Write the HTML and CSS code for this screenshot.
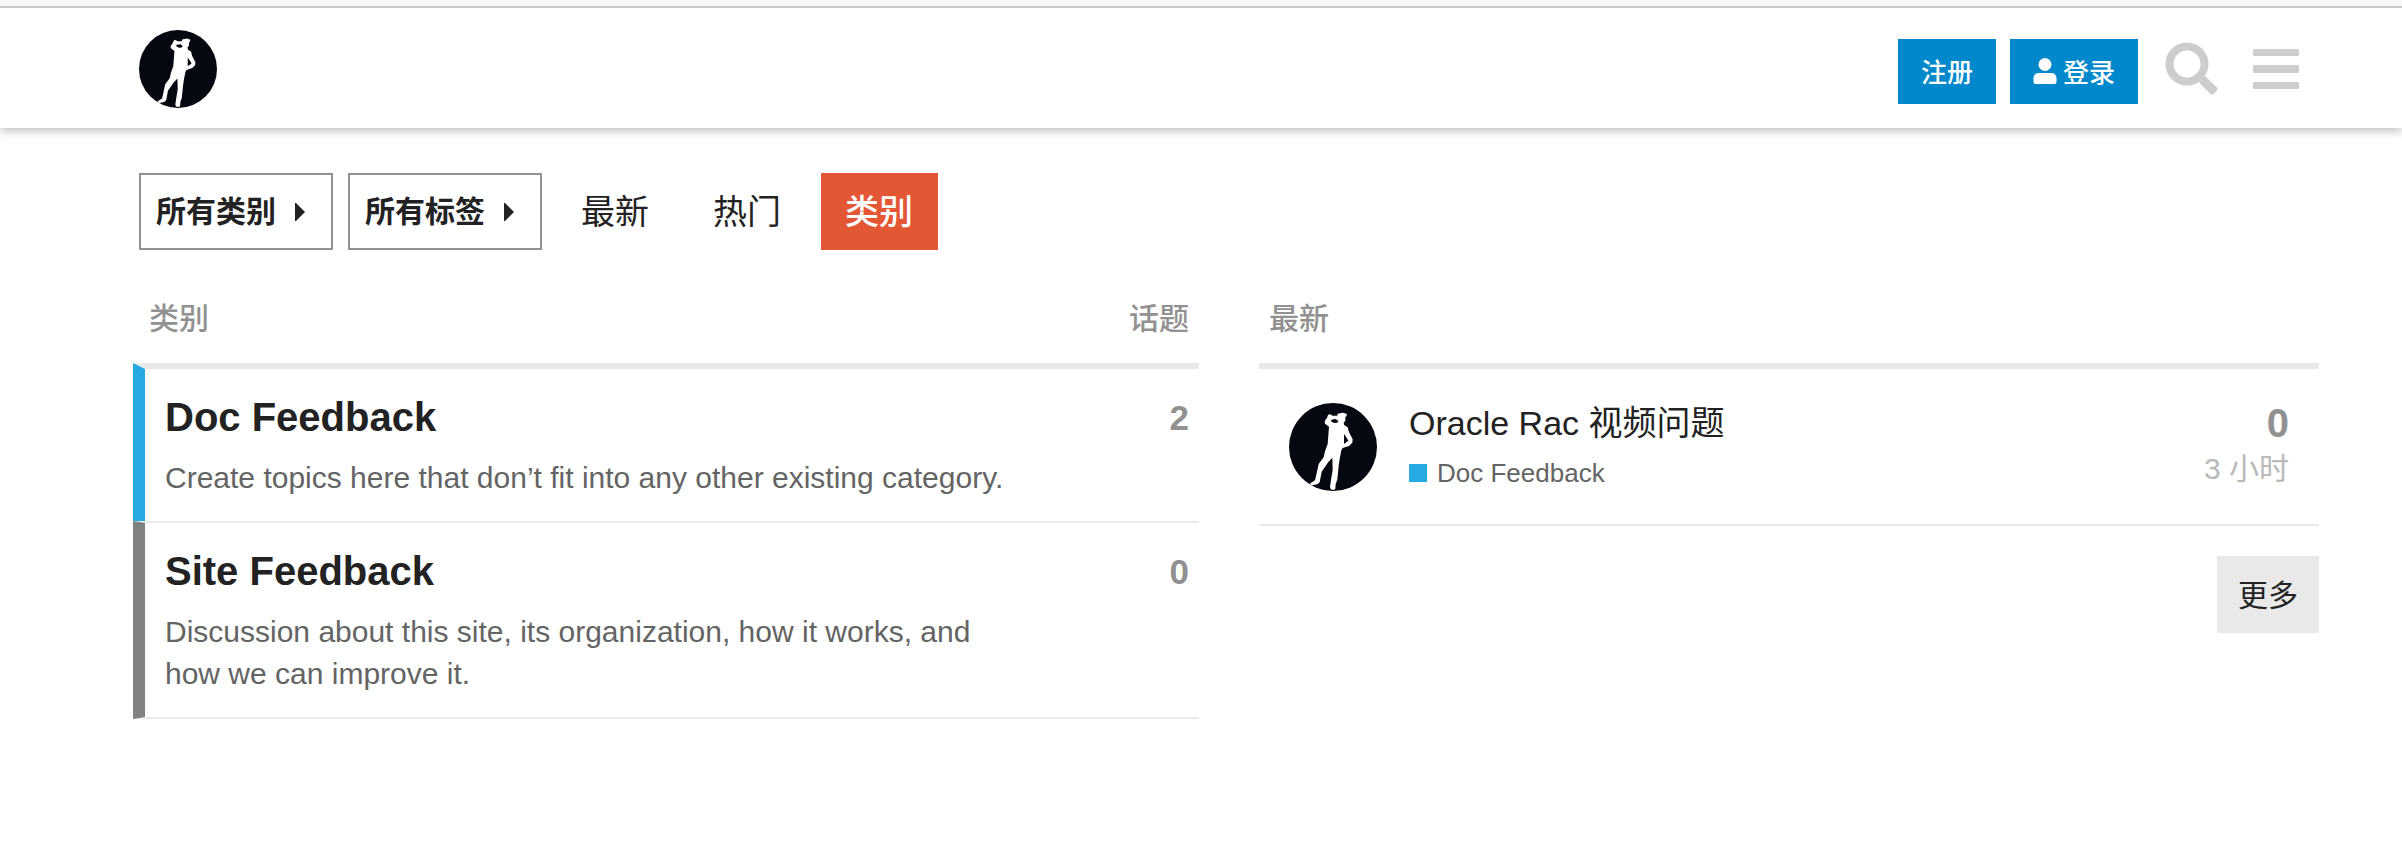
FILE: index.html
```html
<!DOCTYPE html>
<html lang="zh-CN">
<head>
<meta charset="utf-8">
<meta name="viewport" content="width=device-width, initial-scale=1">
<title>类别</title>
<link rel="stylesheet" href="styles.css">
</head>
<body>
<svg class="defs" aria-hidden="true">
  <symbol id="figure" viewBox="42 39 264 264">
    <circle cx="174" cy="171" r="132" fill="#050711"/>
    <path fill="#fff" fill-rule="evenodd" d="M159 76L163 72L173 77L187 77L188 71L204 68L216 72L214 79L211 81L211 92L206 98L208 106L218 112L222 127L233 148L232 158L222 168L203 174L199 181L194 207L191 228L187 268L182 283L181 297L175 300L167 298L165 290L168 270L173 240L172 203L160 216L140 245L134 277L127 283L111 286L104 281L120 271L124 254L131 222L146 202L150 184L158 162L161 123L162 110L150 101L149 94L156 83ZM169 89L168 94L177 99L187 98L190 93L182 87ZM207 132L207 162L214 157L220 152L214 142Z"/>
  </symbol>
</svg>
<header class="site-header">
  <a class="logo" href="#" aria-label="首页"><svg class="logo-image" aria-hidden="true"><use href="#figure"/></svg></a>
  <div class="header-actions">
    <button class="button-primary" type="button">注册</button>
    <button class="button-primary" type="button"><svg class="user-icon" viewBox="0 0 24 26" aria-hidden="true"><circle cx="12" cy="6.5" r="6.5"/><path d="M6 15h12a5 5 0 0 1 5.500 5v4a2 2 0 0 1-2 2H2.500a2 2 0 0 1-2-2v-4A5 5 0 0 1 6 15z"/></svg>登录</button>
    <button class="icon-button search-button" type="button" aria-label="搜索"><svg class="search-icon" viewBox="0 0 54 54" aria-hidden="true"><circle cx="22" cy="22" r="17.500" fill="none" stroke="currentColor" stroke-width="8"/><path d="M34 40L40 34L52 45.500Q53.500 47 52 48.700L48.700 52Q47 53.500 45.500 52L34.500 41z" fill="currentColor"/></svg></button>
    <button class="icon-button" type="button" aria-label="菜单"><svg class="menu-icon" viewBox="0 0 46 42" fill="currentColor" aria-hidden="true"><rect y="1" width="46" height="7" rx="1.500"/><rect y="17" width="46" height="8" rx="1.500"/><rect y="34" width="46" height="7" rx="1.500"/></svg></button>
  </div>
</header>
<main class="content">
  <nav class="navigation" aria-label="浏览">
    <div class="filter">
      <select class="filter-select" aria-label="类别筛选"><option>所有类别</option></select>
      <svg class="caret" viewBox="0 0 10 18" aria-hidden="true"><path d="M0 0L1 0L10 9L1 18H0z"/></svg>
    </div>
    <div class="filter">
      <select class="filter-select" aria-label="标签筛选"><option>所有标签</option></select>
      <svg class="caret" viewBox="0 0 10 18" aria-hidden="true"><path d="M0 0L1 0L10 9L1 18H0z"/></svg>
    </div>
    <a class="nav-link" href="#">最新</a>
    <a class="nav-link" href="#">热门</a>
    <a class="nav-link nav-link-active" href="#" aria-current="page">类别</a>
  </nav>
  <div class="columns">
    <table class="categories">
      <thead>
        <tr><th class="column-title" scope="col">类别</th><th class="column-title column-count" scope="col">话题</th></tr>
      </thead>
      <tbody>
        <tr class="category category-doc">
          <td class="category-info"><h3 class="category-name"><a href="#">Doc Feedback</a></h3><p class="category-description">Create topics here that don’t fit into any other existing category.</p></td>
          <td class="category-count">2</td>
        </tr>
        <tr class="category category-site">
          <td class="category-info"><h3 class="category-name"><a href="#">Site Feedback</a></h3><p class="category-description">Discussion about this site, its organization, how it works, and how we can improve it.</p></td>
          <td class="category-count">0</td>
        </tr>
      </tbody>
    </table>
    <section class="latest">
      <h2 class="column-title">最新</h2>
      <article class="topic">
        <a href="#" aria-label="作者"><svg class="avatar" aria-hidden="true"><use href="#figure"/></svg></a>
        <div class="topic-main">
          <a class="topic-title" href="#">Oracle Rac 视频问题</a>
          <a class="topic-category" href="#"><span class="badge"></span>Doc Feedback</a>
        </div>
        <div class="topic-stats">
          <span class="topic-replies">0</span>
          <a class="topic-age" href="#">3 小时</a>
        </div>
      </article>
      <button class="button-more" type="button">更多</button>
    </section>
  </div>
</main>
</body>
</html>
```
FILE: styles.css
```css
* { box-sizing: border-box; }

html { background: #fff; }

body {
  margin: 0;
  border-top: 6px solid #f8f8fa;
  background: #fff;
  color: #222;
  font-family: "Liberation Sans", "Noto Sans CJK SC", sans-serif;
  font-size: 30px;
  line-height: 42px;
}

a { color: inherit; text-decoration: none; }

button, select {
  margin: 0;
  border: 0;
  border-radius: 0;
  color: inherit;
  font-family: inherit;
  font-size: 30px;
  cursor: pointer;
}

.defs { position: absolute; width: 0; height: 0; }

.site-header {
  display: flex;
  align-items: center;
  justify-content: space-between;
  padding: 22px 103px 20px 139px;
  border-top: 2px solid #c9c9c9;
  box-shadow: 0 4px 8px rgba(0, 0, 0, 0.22);
}

.logo, .logo-image, .avatar { display: block; }
.logo-image { width: 78px; height: 78px; }

.header-actions { display: flex; align-items: center; gap: 14px; }

.button-primary {
  display: flex;
  align-items: center;
  gap: 6px;
  height: 65px;
  margin-top: 5px;
  padding: 0 23px 2px;
  background: #0088cc;
  color: #fff;
  font-size: 26px;
  font-weight: 500;
}

.user-icon { width: 24px; height: 26px; fill: currentColor; }

.icon-button { display: flex; padding: 0; background: none; color: #cdcdcd; }
.search-button { margin: 0 20px 0 13px; }
.search-icon { width: 54px; height: 54px; }
.menu-icon { width: 46px; height: 42px; }

.content { padding: 45px 83px 40px 139px; }

.navigation { display: flex; gap: 15px; }

.filter { display: grid; align-items: center; }

.filter-select {
  grid-area: 1 / 1;
  appearance: none;
  width: 194px;
  height: 77px;
  padding: 0 15px;
  border: 2px solid #919191;
  background: #fff;
  color: #222;
  font-weight: 700;
}

.caret {
  grid-area: 1 / 1;
  justify-self: end;
  width: 10px;
  height: 18px;
  margin-right: 28px;
  fill: #222;
  pointer-events: none;
}

.nav-link {
  display: flex;
  align-items: center;
  height: 77px;
  padding: 0 25px 0 24px;
  font-size: 34px;
}

.nav-link-active { background: #e45735; color: #fff; font-weight: 500; }

.columns {
  display: grid;
  grid-template-columns: 1fr 1fr;
  gap: 60px;
  align-items: start;
  margin-top: 48px;
}

.column-title {
  height: 65px;
  margin: 0;
  padding: 0 10px;
  color: #919191;
  font-size: 30px;
  font-weight: 500;
  text-align: left;
  vertical-align: top;
}

.categories {
  width: calc(100% + 6px);
  margin-left: -6px;
  border-spacing: 0;
}

.categories .column-title:first-child { padding-left: 16px; }
.categories .column-count { width: 160px; text-align: right; }

.category td { border-top: 2px solid #e9e9e9; vertical-align: top; }
.category-doc td { border-top-width: 6px; }
.category-site td { border-bottom: 2px solid #e9e9e9; }
.category .category-info { padding: 25px 10px 22px 20px; border-left: 12px solid #808281; }
.category-doc .category-info { border-left-color: #25aae2; }

.category-name { margin: 0 0 17px; font-size: 40px; line-height: 46px; }
.category-description { max-width: 840px; margin: 0; color: #646464; }

.category .category-count {
  padding: 26px 10px 0;
  color: #919191;
  font-size: 35px;
  font-weight: 700;
  line-height: 46px;
  text-align: right;
}

.latest { display: flex; flex-direction: column; }

.topic {
  display: flex;
  align-items: flex-start;
  width: 100%;
  padding: 34px 30px 31px;
  border-top: 6px solid #e9e9e9;
  border-bottom: 2px solid #e9e9e9;
}

.avatar { width: 88px; height: 88px; }

.topic-main { display: flex; flex: 1; flex-direction: column; gap: 10px; margin-left: 32px; }
.topic-title { font-size: 34px; line-height: 40px; }

.topic-category {
  display: flex;
  align-items: center;
  gap: 10px;
  color: #646464;
  font-size: 26px;
  line-height: 40px;
}

.badge { width: 18px; height: 18px; background: #25aae2; }

.topic-stats { display: flex; flex-direction: column; align-items: flex-end; gap: 5px; }
.topic-replies { color: #919191; font-size: 40px; font-weight: 700; line-height: 40px; }
.topic-age { color: #b9b9b9; line-height: 42px; }

.button-more {
  align-self: flex-end;
  height: 77px;
  margin-top: 30px;
  padding: 0 21px 4px;
  background: #e9e9e9;
}
```
